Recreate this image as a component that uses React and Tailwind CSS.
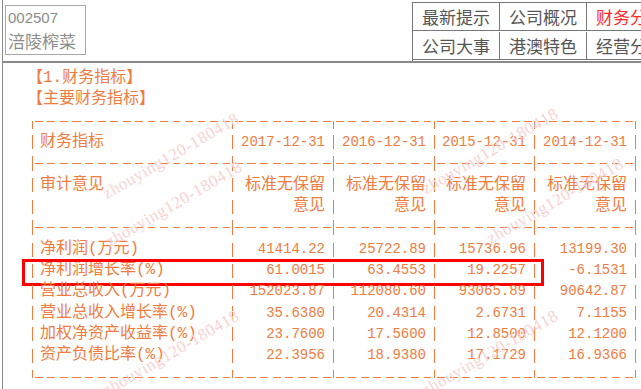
import React from 'react';

const columns = ['2017-12-31', '2016-12-31', '2015-12-31', '2014-12-31'];

const rows = [
  { label: '净利润(万元)', values: ['41414.22', '25722.89', '15736.96', '13199.30'] },
  { label: '净利润增长率(%)', values: ['61.0015', '63.4553', '19.2257', '-6.1531'], marked: true },
  { label: '营业总收入(万元)', values: ['152023.87', '112080.60', '93065.89', '90642.87'] },
  { label: '营业总收入增长率(%)', values: ['35.6380', '20.4314', '2.6731', '7.1155'] },
  { label: '加权净资产收益率(%)', values: ['23.7600', '17.5600', '12.8500', '12.1200'] },
  { label: '资产负债比率(%)', values: ['22.3956', '18.9380', '17.1729', '16.9366'] },
];

const cellWidths = ['w-[199px]', 'w-[100px]', 'w-[100px]', 'w-[99px]', 'w-[100px]'];

// vertical "|" pieces, one per text line
const Sep = () => (
  <div className="w-px shrink-0 self-stretch bg-[repeating-linear-gradient(to_bottom,transparent_0px,transparent_3.5px,#f07c40_3.5px,#f07c40_17.5px,transparent_17.5px,transparent_21.33px)]" />
);

const lineSep = {
  top: 'bg-[linear-gradient(to_bottom,transparent_10.5px,#f07c40_10.5px,#f07c40_18px,transparent_18px)]',
  mid: 'bg-[linear-gradient(to_bottom,transparent_3px,#f07c40_3px,#f07c40_18px,transparent_18px)]',
  bottom: 'bg-[linear-gradient(to_bottom,transparent_3px,#f07c40_3px,#f07c40_11px,transparent_11px)]',
};

const LineRow = ({ pos }) => (
  <div className="flex h-[21.33px]">
    {cellWidths.map((w, i) => (
      <React.Fragment key={i}>
        <div className={`w-px shrink-0 h-full ${lineSep[pos]}`} />
        <div className={`${w} shrink-0 flex items-center`}>
          <div className="h-px w-full bg-[repeating-linear-gradient(to_right,transparent_0px,transparent_2px,#f07c40_2px,#f07c40_10px,transparent_10px,transparent_12.5px)]" />
        </div>
      </React.Fragment>
    ))}
    <div className={`w-px shrink-0 h-full ${lineSep[pos]}`} />
  </div>
);

const TextRow = ({ label, values, marked, wide }) => (
  <div className="relative flex leading-[21.33px]">
    <Sep />
    <div className="w-[199px] shrink-0 pl-[7px] text-[16px] whitespace-nowrap">{label}</div>
    {values.map((v, i) => (
      <React.Fragment key={i}>
        <Sep />
        <div className={`${cellWidths[i + 1]} shrink-0 pr-[8px] text-right whitespace-nowrap ${wide ? 'text-[16px]' : 'text-[14px]'}`}>
          {v}
        </div>
      </React.Fragment>
    ))}
    <Sep />
    {marked && (
      <div className="absolute left-[-10px] top-[-1px] w-[522px] h-[27px] border-[3px] border-[#ff0000]" />
    )}
  </div>
);

// watermark start points (left edge of text)
const watermarks = [
  'left-[104px] top-[186px]',
  'left-[107px] top-[234px]',
  'left-[104px] top-[383px]',
  'left-[423px] top-[181px]',
  'left-[488px] top-[231px]',
  'left-[423px] top-[383px]',
];

export default function App() {
  return (
    <div className="relative w-[641px] h-[389px] overflow-hidden bg-white font-['Liberation_Mono','Noto_Sans_CJK_SC',monospace]">
      <div className="ml-[2px] h-full border-l border-[#8a8a8a]">
        {/* header */}
        <div className="flex h-[63px] border-b-2 border-[#8a8a8a]">
          <div className="ml-[2px] mt-[5px] w-[81px] h-[50px] shrink-0 border border-[#a8a8a8] pl-[2px] text-[#8c8c8c]">
            <div className="text-[15px] leading-[22px] pt-[1px] font-['Liberation_Sans',sans-serif]">002507</div>
            <div className="text-[17px] leading-[24px] font-['Noto_Sans_CJK_SC',sans-serif]">涪陵榨菜</div>
          </div>
          <div className="ml-[326px] mt-[2px] shrink-0 grid grid-cols-[87px_87px_87px] border-l border-t border-[#777] text-[17px] text-[#555] font-['Noto_Sans_CJK_SC',sans-serif]">
            <div className="h-[28px] flex items-center justify-center border-r border-b border-[#777]">最新提示</div>
            <div className="h-[28px] flex items-center justify-center border-r border-b border-[#777]">公司概况</div>
            <div className="h-[28px] flex items-center justify-center border-r border-b border-[#777] text-[#ff2a2a]">财务分析</div>
            <div className="h-[28px] flex items-center justify-center border-r border-b border-[#777]">公司大事</div>
            <div className="h-[28px] flex items-center justify-center border-r border-b border-[#777]">港澳特色</div>
            <div className="h-[28px] flex items-center justify-center border-r border-b border-[#777]">经营分析</div>
          </div>
        </div>

        {/* content */}
        <div className="pt-[5px] pl-[29px] text-[#f07c40]">
          <div className="-ml-[5px] text-[16px] leading-[21.33px]">
            <div>【1.财务指标】</div>
            <div>【主要财务指标】</div>
          </div>
          <div className="w-[604px]">
            <LineRow pos="top" />
            <TextRow label="财务指标" values={columns} />
            <LineRow pos="mid" />
            <TextRow
              label="审计意见"
              wide
              values={columns.map((c) => (
                <React.Fragment key={c}>
                  标准无保留
                  <br />
                  意见
                </React.Fragment>
              ))}
            />
            <LineRow pos="mid" />
            {rows.map((r) => (
              <TextRow key={r.label} label={r.label} values={r.values} marked={r.marked} />
            ))}
            <LineRow pos="bottom" />
          </div>
        </div>
      </div>

      {/* watermark overlay */}
      {watermarks.map((pos) => (
        <div
          key={pos}
          className={`pointer-events-none absolute ${pos} origin-left -rotate-[30deg] whitespace-nowrap text-[17px] leading-[17px] tracking-[0.5px] text-[#f8d3d3] font-['Liberation_Serif',serif]`}
        >
          zhouying120-180418
        </div>
      ))}
    </div>
  );
}
